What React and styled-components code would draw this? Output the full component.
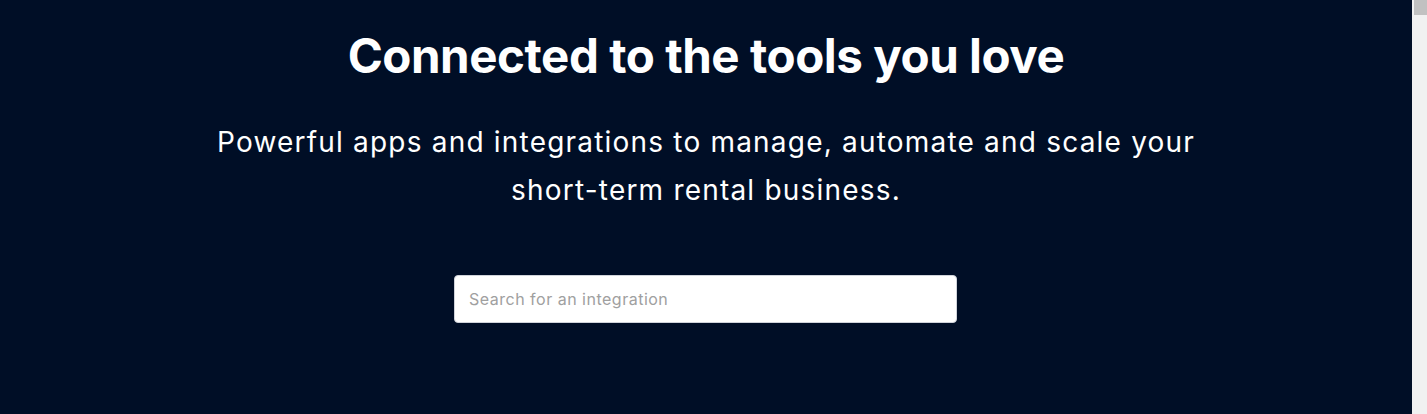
import React from 'react';
import styled, { createGlobalStyle } from 'styled-components';

const GlobalStyle = createGlobalStyle`
  html, body {
    margin: 0;
    padding: 0;
    background: #000e26;
  }
  body {
    font-family: Inter, "Liberation Sans", sans-serif;
  }
`;

const Page = styled.div`
  display: flex;
  height: 414px;
  overflow: hidden;
`;

const Hero = styled.section`
  flex: 1;
  display: flex;
  flex-direction: column;
  align-items: center;
  padding: 28px 20px 0;
  color: #ffffff;
  text-align: center;
`;

const Title = styled.h1`
  margin: 0;
  font-size: 47.5px;
  line-height: 56px;
  font-weight: 700;
  letter-spacing: -0.45px;
`;

const Subtitle = styled.p`
  margin: 34px 0 0;
  max-width: 1000px;
  font-size: 28px;
  line-height: 48px;
  font-weight: 400;
  letter-spacing: 1.2px;
`;

const NoWrap = styled.span`
  white-space: nowrap;
`;

const SearchInput = styled.input`
  box-sizing: border-box;
  margin: 61px 1px 0 0;
  width: 503px;
  height: 48px;
  padding: 0 14px;
  border: 1px solid #d0d3da;
  border-radius: 4px;
  background: #ffffff;
  font-family: Inter, "Liberation Sans", sans-serif;
  font-size: 16px;
  letter-spacing: 0.5px;
  color: #222;
  outline: none;

  &::placeholder {
    color: #a0a0a0;
  }
`;

const ScrollTrack = styled.div`
  flex: 0 0 15px;
  background: #f1f1f1;
  display: flex;
  flex-direction: column;
  align-items: flex-end;
`;

const ScrollThumb = styled.div`
  width: 13px;
  height: 15px;
  background: #c1c1c1;
`;

export default function App() {
  return (
    <>
      <GlobalStyle />
      <Page>
        <Hero>
          <Title>Connected to the tools you love</Title>
          <Subtitle>
            Powerful apps and integrations to manage, automate and scale your{' '}
            <NoWrap>short-term</NoWrap> rental business.
          </Subtitle>
          <SearchInput type="text" placeholder="Search for an integration" />
        </Hero>
        <ScrollTrack>
          <ScrollThumb />
        </ScrollTrack>
      </Page>
    </>
  );
}
